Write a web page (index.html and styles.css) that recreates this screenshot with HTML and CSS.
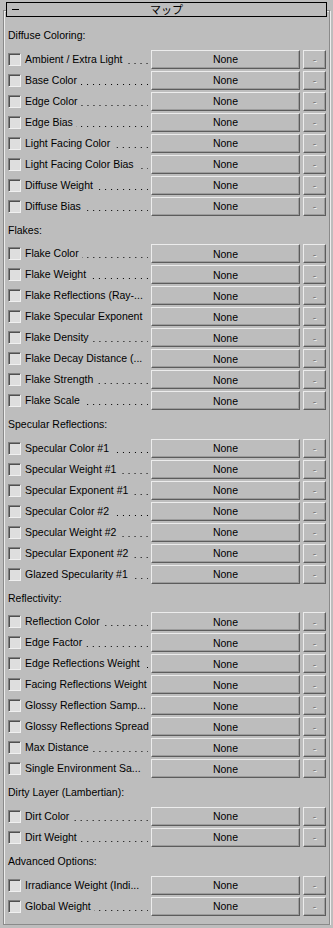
FILE: index.html
```html
<!DOCTYPE html>
<html lang="ja">
<head>
  <meta charset="UTF-8">
  <meta name="viewport" content="width=device-width, initial-scale=1.0">
  <title>マップ</title>
  <link rel="stylesheet" href="styles.css">
</head>
<body>

  <!-- Rollout title bar -->
  <div class="rollout-head">
    <span class="collapse"></span>
    <span class="title">マップ</span>
  </div>

  <div class="group">

    <div class="section">Diffuse Coloring:</div>
    <div class="row"><span class="check"></span><span class="label">Ambient / Extra Light<i class="dots"></i></span><button class="map">None</button><button class="clear">-</button></div>
    <div class="row"><span class="check"></span><span class="label">Base Color<i class="dots"></i></span><button class="map">None</button><button class="clear">-</button></div>
    <div class="row"><span class="check"></span><span class="label">Edge Color<i class="dots"></i></span><button class="map">None</button><button class="clear">-</button></div>
    <div class="row"><span class="check"></span><span class="label">Edge Bias<i class="dots"></i></span><button class="map">None</button><button class="clear">-</button></div>
    <div class="row"><span class="check"></span><span class="label">Light Facing Color<i class="dots"></i></span><button class="map">None</button><button class="clear">-</button></div>
    <div class="row"><span class="check"></span><span class="label">Light Facing Color Bias<i class="dots"></i></span><button class="map">None</button><button class="clear">-</button></div>
    <div class="row"><span class="check"></span><span class="label">Diffuse Weight<i class="dots"></i></span><button class="map">None</button><button class="clear">-</button></div>
    <div class="row"><span class="check"></span><span class="label">Diffuse Bias<i class="dots"></i></span><button class="map">None</button><button class="clear">-</button></div>

    <div class="section">Flakes:</div>
    <div class="row"><span class="check"></span><span class="label">Flake Color<i class="dots"></i></span><button class="map">None</button><button class="clear">-</button></div>
    <div class="row"><span class="check"></span><span class="label">Flake Weight<i class="dots"></i></span><button class="map">None</button><button class="clear">-</button></div>
    <div class="row"><span class="check"></span><span class="label">Flake Reflections (Ray-...</span><button class="map">None</button><button class="clear">-</button></div>
    <div class="row"><span class="check"></span><span class="label">Flake Specular Exponent</span><button class="map">None</button><button class="clear">-</button></div>
    <div class="row"><span class="check"></span><span class="label">Flake Density<i class="dots"></i></span><button class="map">None</button><button class="clear">-</button></div>
    <div class="row"><span class="check"></span><span class="label">Flake Decay Distance (...</span><button class="map">None</button><button class="clear">-</button></div>
    <div class="row"><span class="check"></span><span class="label">Flake Strength<i class="dots"></i></span><button class="map">None</button><button class="clear">-</button></div>
    <div class="row"><span class="check"></span><span class="label">Flake Scale<i class="dots"></i></span><button class="map">None</button><button class="clear">-</button></div>

    <div class="section">Specular Reflections:</div>
    <div class="row"><span class="check"></span><span class="label">Specular Color #1<i class="dots"></i></span><button class="map">None</button><button class="clear">-</button></div>
    <div class="row"><span class="check"></span><span class="label">Specular Weight #1<i class="dots"></i></span><button class="map">None</button><button class="clear">-</button></div>
    <div class="row"><span class="check"></span><span class="label">Specular Exponent #1<i class="dots"></i></span><button class="map">None</button><button class="clear">-</button></div>
    <div class="row"><span class="check"></span><span class="label">Specular Color #2<i class="dots"></i></span><button class="map">None</button><button class="clear">-</button></div>
    <div class="row"><span class="check"></span><span class="label">Specular Weight #2<i class="dots"></i></span><button class="map">None</button><button class="clear">-</button></div>
    <div class="row"><span class="check"></span><span class="label">Specular Exponent #2<i class="dots"></i></span><button class="map">None</button><button class="clear">-</button></div>
    <div class="row"><span class="check"></span><span class="label">Glazed Specularity #1<i class="dots"></i></span><button class="map">None</button><button class="clear">-</button></div>

    <div class="section">Reflectivity:</div>
    <div class="row"><span class="check"></span><span class="label">Reflection Color<i class="dots"></i></span><button class="map">None</button><button class="clear">-</button></div>
    <div class="row"><span class="check"></span><span class="label">Edge Factor<i class="dots"></i></span><button class="map">None</button><button class="clear">-</button></div>
    <div class="row"><span class="check"></span><span class="label">Edge Reflections Weight<i class="dots"></i></span><button class="map">None</button><button class="clear">-</button></div>
    <div class="row"><span class="check"></span><span class="label">Facing Reflections Weight</span><button class="map">None</button><button class="clear">-</button></div>
    <div class="row"><span class="check"></span><span class="label">Glossy Reflection Samp...</span><button class="map">None</button><button class="clear">-</button></div>
    <div class="row"><span class="check"></span><span class="label">Glossy Reflections Spread</span><button class="map">None</button><button class="clear">-</button></div>
    <div class="row"><span class="check"></span><span class="label">Max Distance<i class="dots"></i></span><button class="map">None</button><button class="clear">-</button></div>
    <div class="row"><span class="check"></span><span class="label">Single Environment Sa...</span><button class="map">None</button><button class="clear">-</button></div>

    <div class="section">Dirty Layer (Lambertian):</div>
    <div class="row"><span class="check"></span><span class="label">Dirt Color<i class="dots"></i></span><button class="map">None</button><button class="clear">-</button></div>
    <div class="row"><span class="check"></span><span class="label">Dirt Weight<i class="dots"></i></span><button class="map">None</button><button class="clear">-</button></div>

    <div class="section">Advanced Options:</div>
    <div class="row"><span class="check"></span><span class="label">Irradiance Weight (Indi...</span><button class="map">None</button><button class="clear">-</button></div>
    <div class="row"><span class="check"></span><span class="label">Global Weight<i class="dots"></i></span><button class="map">None</button><button class="clear">-</button></div>

  </div>

</body>
</html>
```

FILE: styles.css
```css
body {
  font-family: 'Liberation Sans', Arial, sans-serif;
  font-size: 10.5px;
  margin: 0;
  padding: 2px 3px 0;
  background-color: #bdbdbd;
  color: #000;
}
.rollout-head {
  position: relative;
  z-index: 1;
  margin: 0 3px;
  height: 13px;
  border: 1px solid #000;
  background-color: #bdbdbd;
  display: flex;
  align-items: center;
  justify-content: center;
}
.collapse {
  position: absolute;
  left: 5px;
  top: 6px;
  width: 7px;
  height: 1px;
  background-color: #000;
}
.title {
  font-family: 'Noto Sans CJK JP', sans-serif;
  font-size: 11px;
  line-height: 13px;
}
.group {
  margin-top: -7px;
  height: 915px;
  box-sizing: border-box;
  padding: 11px 2px 0 4px;
  border: 1px solid #8a8a8a;
  box-shadow: inset 1px 1px 0 #ececec, 1px 1px 0 #ececec;
}
.section {
  height: 26.6px;
  line-height: 27px;
}
.row {
  display: flex;
  align-items: center;
  height: 21px;
}
.check {
  width: 13px;
  height: 13px;
  box-sizing: border-box;
  border: 1px solid;
  border-color: #808080 #f0f0f0 #f0f0f0 #808080;
  background-color: #dedede;
  box-shadow: inset 1px 1px 0 #505050;
  flex: none;
}
.label {
  display: flex;
  width: 123px;
  height: 13px;
  line-height: 13px;
  margin-left: 4px;
  padding-right: 3px;
  white-space: nowrap;
  flex: none;
}
.dots {
  flex: 1;
  margin-left: 3px;
  background-image: linear-gradient(to right, transparent 5px, #000 5px);
  background-size: 6px 1px;
  background-repeat: repeat-x;
  background-position: right 0 top 10px;
}
button {
  font-family: 'Liberation Sans', Arial, sans-serif;
  font-size: 10.5px;
  height: 19px;
  padding: 0;
  background-color: #bdbdbd;
  border: 1px solid;
  border-color: #ececec #5c5c5c #5c5c5c #ececec;
  box-shadow: inset -1px -1px 0 #9c9c9c;
  color: #000;
}
.map {
  width: 149px;
  flex: none;
}
.clear {
  width: 23px;
  margin-left: 3px;
  flex: none;
  color: #7a7a7a;
  text-shadow: 1px 1px 0 #f0f0f0;
}
```
